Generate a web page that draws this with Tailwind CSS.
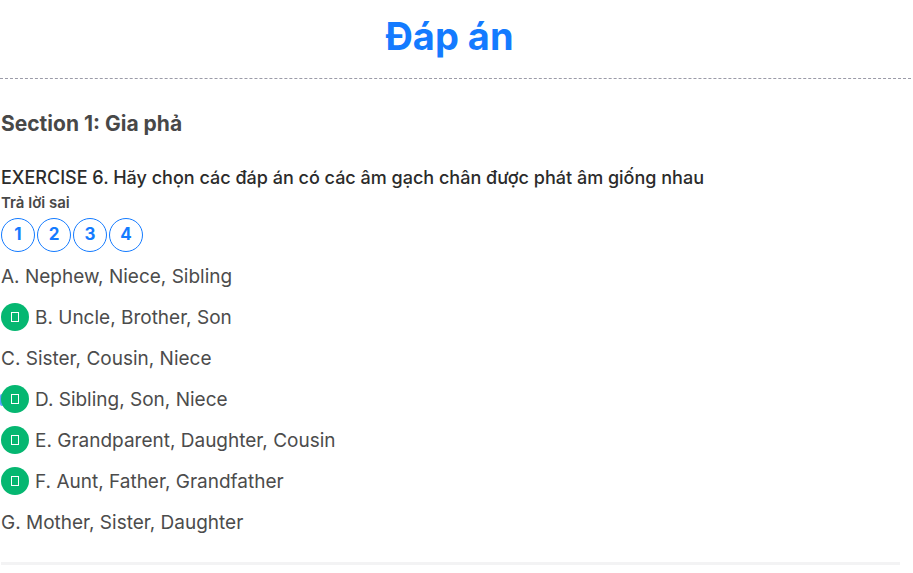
<!DOCTYPE html>
<html lang="vi"><head><meta charset="utf-8"><meta name="viewport" content="width=device-width, initial-scale=1"><title>Đáp án</title>
<script src="https://cdn.jsdelivr.net/npm/@tailwindcss/browser@4"></script></head>
<body class="overflow-x-hidden bg-white font-[Inter,sans-serif] text-[#4c4c4c]">
<header class="mr-0.5 border-b border-dashed border-[#9b9ba8] pt-[7px] pr-3 pb-[13px]"><h1 class="text-center text-[38px] leading-[58px] font-bold text-[#147bff]">Đáp án</h1></header>
<main class="pl-px">
<h2 class="mt-8 text-[21px] leading-[26px] font-bold text-[#484848]">Section 1: Gia phả</h2>
<h3 class="mt-[29px] text-lg leading-6 font-medium text-[#2b2b2b]">EXERCISE 6. Hãy chọn các đáp án có các âm gạch chân được phát âm giống nhau</h3>
<p class="text-[15px] leading-[26px] font-semibold text-[#484848]">Trả lời sai</p>
<nav class="mt-0.5 flex gap-0.5">
<a href="#q1" class="flex size-[34px] items-center justify-center rounded-full border border-[#147bff] text-[17px] font-bold text-[#147bff]">1</a>
<a href="#q2" class="flex size-[34px] items-center justify-center rounded-full border border-[#147bff] text-[17px] font-bold text-[#147bff]">2</a>
<a href="#q3" class="flex size-[34px] items-center justify-center rounded-full border border-[#147bff] text-[17px] font-bold text-[#147bff]">3</a>
<a href="#q4" class="flex size-[34px] items-center justify-center rounded-full border border-[#147bff] text-[17px] font-bold text-[#147bff]">4</a>
</nav>
<ul class="mt-[5px] text-[19px]">
<li class="flex h-[41px] items-center">A. Nephew, Niece, Sibling</li>
<li class="flex h-[41px] items-center gap-1.5"><span class="mb-1 flex size-7 items-center justify-center rounded-full bg-[#05b771]"><span class="h-2.5 w-2 border border-white"></span></span>B. Uncle, Brother, Son</li>
<li class="flex h-[41px] items-center">C. Sister, Cousin, Niece</li>
<li class="relative flex h-[41px] items-center gap-1.5"><span class="absolute top-3.5 -left-px h-3 w-1 rounded-full bg-[#147bff]/70"></span><span class="relative mb-1 flex size-7 items-center justify-center rounded-full bg-[#05b771]"><span class="h-2.5 w-2 border border-white"></span></span>D. Sibling, Son, Niece</li>
<li class="flex h-[41px] items-center gap-1.5"><span class="mb-1 flex size-7 items-center justify-center rounded-full bg-[#05b771]"><span class="h-2.5 w-2 border border-white"></span></span>E. Grandparent, Daughter, Cousin</li>
<li class="flex h-[41px] items-center gap-1.5"><span class="mb-1 flex size-7 items-center justify-center rounded-full bg-[#05b771]"><span class="h-2.5 w-2 border border-white"></span></span>F. Aunt, Father, Grandfather</li>
<li class="flex h-[41px] items-center">G. Mother, Sister, Daughter</li>
</ul>
<hr class="mt-[18px] mr-[13px] border-t-[3px] border-[#f3f3f4]">
</main></body></html>
